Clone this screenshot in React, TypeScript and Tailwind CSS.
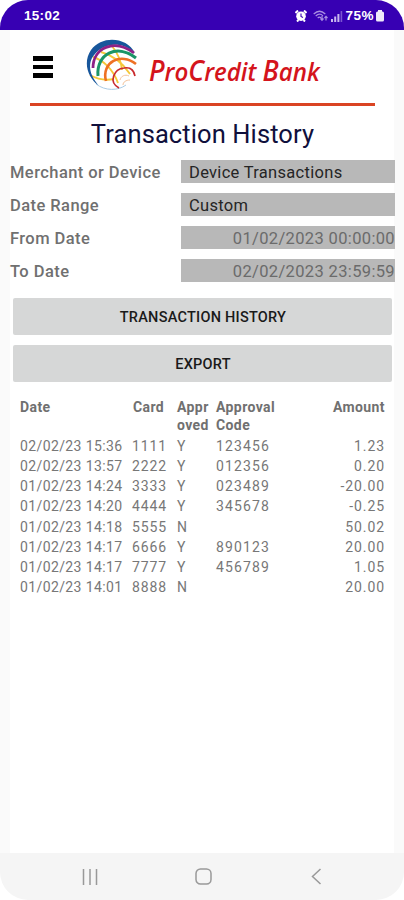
const transactions = [
  { date: '02/02/23 15:36', card: '1111', approved: 'Y', code: '123456', amount: '1.23' },
  { date: '02/02/23 13:57', card: '2222', approved: 'Y', code: '012356', amount: '0.20' },
  { date: '01/02/23 14:24', card: '3333', approved: 'Y', code: '023489', amount: '-20.00' },
  { date: '01/02/23 14:20', card: '4444', approved: 'Y', code: '345678', amount: '-0.25' },
  { date: '01/02/23 14:18', card: '5555', approved: 'N', code: '', amount: '50.02' },
  { date: '01/02/23 14:17', card: '6666', approved: 'Y', code: '890123', amount: '20.00' },
  { date: '01/02/23 14:17', card: '7777', approved: 'Y', code: '456789', amount: '1.05' },
  { date: '01/02/23 14:01', card: '8888', approved: 'N', code: '', amount: '20.00' },
];

const GRID = 'grid grid-cols-[112px_45px_39px_98px_1fr] pl-5 pr-[19px]';

function StatusBar() {
  return (
    <div className="flex h-[30px] shrink-0 items-center rounded-t-[28px] bg-[#3700b3] pl-[24px] pr-[20px] pt-[2px] text-white">
      <span className="font-['Liberation_Sans',sans-serif] text-[13.5px] font-bold tracking-[0.3px]">15:02</span>
      <svg className="ml-auto" width="12" height="12" viewBox="0 0 12 12" aria-hidden>
        <path d="M.5 3 3 .5M11.5 3 9 .5M2 11.5l1.5-1.5M10 11.5 8.5 10" stroke="#fff" strokeWidth="2" />
        <circle cx="6" cy="6.2" r="4.8" fill="#fff" />
        <path d="M6 3.5v3l2 1" fill="none" stroke="#3700b3" strokeWidth="1.1" />
      </svg>
      <svg className="ml-[6px]" width="15" height="12" viewBox="0 0 15 12" fill="none" stroke="#a98de2" aria-hidden>
        <path d="M.7 4Q6.5-1.5 12.3 4M2.7 6Q6.5 2.3 10 5.8M4.7 8Q6.5 6.2 8 8" strokeWidth="1.2" />
        <path d="M9 6v4M7.5 8.5 9 10.3l1.5-1.8M13 10.5v-4M11.5 8 13 6.3 14.5 8" strokeWidth="1.2" />
      </svg>
      <svg className="ml-[3px]" width="12" height="12" viewBox="0 0 12 12" fill="#c9b8ee" aria-hidden>
        <path d="M0 9h2v3H0zM3.2 6.5h2V12h-2zM6.4 4h2v8h-2z" />
        <path d="M9.6 1h1.6v11H9.6z" fill="#7b55d0" />
      </svg>
      <span className="ml-[2px] font-['Liberation_Sans',sans-serif] text-[13.5px] font-bold tracking-[0.5px]">75%</span>
      <svg className="ml-[2px]" width="8" height="12" viewBox="0 0 8 12" fill="#efeafa" aria-hidden>
        <rect x="2" width="4" height="3" />
        <rect y="1.5" width="8" height="10" rx="1.5" />
      </svg>
    </div>
  );
}

function Globe() {
  return (
    <svg width="54" height="54" viewBox="0 0 54 54" fill="none" aria-hidden>
      <g stroke="#f5c83a" strokeWidth="1.9">
        <path d="M27 8c4 5 9 13 10 24" />
        <path d="M16 14c11 3 21 10 29 22" />
        <path d="M8 19c10 3 20 12 25 26" />
        <path d="M5 37c7 4 15 6 24 4" />
      </g>
      <path d="M50 15C42-1 17-3 6 12-2 24 2 39 14 48 5 38 3 28 7 20 15 6 35 1 50 15Z" fill="#17569b" />
      <path d="M11 46c9 7 22 7 30 1" stroke="#a9cbe5" strokeWidth="1" />
      <path d="M8 30C8 10 29 0 49 15" stroke="#8e2186" strokeWidth="2.8" />
      <path d="M13 38C11 16 32 5 51 20" stroke="#1b9567" strokeWidth="3" />
      <path d="M21 43C16 24 36 14 51 26" stroke="#ee7124" strokeWidth="2.6" />
      <path d="M34 50C23 44 29 31 39 30c6-1 10 2 11 8" stroke="#c92a2d" strokeWidth="1.6" />
      <path d="M35 42c1-4 5-6 9-4M38 47c0-3 3-5 7-5" stroke="#f3c29a" strokeWidth="1" />
    </svg>
  );
}

function Header() {
  return (
    <header className="h-[76px] px-[20px]">
      <div className="flex h-[73px] items-start">
        <div className="ml-[3px] mt-[26px] flex w-5 flex-col gap-[4px]">
          <span className="h-[4.5px] bg-black" />
          <span className="h-[4.5px] bg-black" />
          <span className="h-[4.5px] bg-black" />
        </div>
        <div className="ml-[32px] mt-[8px]">
          <Globe />
        </div>
        <span className="ml-[10px] mt-[20px] origin-left scale-x-[0.945] whitespace-nowrap font-['Open_Sans',sans-serif] text-[25.5px] font-semibold italic leading-10 text-[#d4141c]">
          <span className="text-[28px]">P</span>ro<span className="text-[28px]">C</span>redit{' '}
          <span className="text-[28px]">B</span>ank
        </span>
      </div>
      <div className="h-[3px] w-[345px] bg-[#da4423]" />
    </header>
  );
}

type FieldProps = {
  label: string;
  value: string;
  isDate?: boolean;
};

function Field({ label, value, isDate }: FieldProps) {
  return (
    <div className="flex h-[23px] items-center">
      <span className="w-[171px] shrink-0 pt-[3px] text-[16.5px] font-medium tracking-[0.43px] text-[#707070]">
        {label}
      </span>
      <span
        className={
          isDate
            ? 'h-[23px] w-[214px] shrink-0 bg-[#b8b8b8] text-right text-[16.5px] leading-[26px] tracking-[0.35px] text-[#6b6b6b]'
            : 'h-[23px] w-[214px] shrink-0 bg-[#b8b8b8] pl-2 text-[16.5px] leading-[26px] tracking-[0.3px] text-[#252525]'
        }
      >
        {value}
      </span>
    </div>
  );
}

function ActionButton({ label }: { label: string }) {
  return (
    <button
      type="button"
      className="h-[37px] w-full rounded-[2px] bg-[#d6d7d7] pl-px pt-[3px] text-[14.5px] font-medium tracking-[0.25px] text-[#1a1a1a]"
    >
      {label}
    </button>
  );
}

function TransactionTable() {
  return (
    <div className="-mx-[10px] mt-[16px] text-[#777]">
      <div className={`${GRID} mb-[1.5px] h-[36px] text-[14px] font-bold leading-[18px] tracking-[0.4px] text-[#707070]`}>
        <span>Date</span>
        <span className="pl-px">Card</span>
        <span>
          Appr
          <br />
          oved
        </span>
        <span>
          Approval
          <br />
          Code
        </span>
        <span className="text-right">Amount</span>
      </div>
      {transactions.map((row) => (
        <div key={row.card} className={`${GRID} h-[20.25px] text-[14px] leading-[20.25px]`}>
          <span className="whitespace-nowrap tracking-[0.38px]">{row.date}</span>
          <span className="tracking-[0.9px]">{row.card}</span>
          <span>{row.approved}</span>
          <span className="tracking-[1.15px]">{row.code}</span>
          <span className="text-right tracking-[0.9px]">{row.amount}</span>
        </div>
      ))}
    </div>
  );
}

function NavBar() {
  return (
    <nav className="flex h-[47px] shrink-0 items-center rounded-b-[28px] bg-[#f5f5f5] text-[#999]">
      <svg className="ml-[82px]" width="16" height="16" viewBox="0 0 16 16" stroke="currentColor" strokeWidth="1.5" aria-hidden>
        <path d="M1.5 0v16M8 0v16M14.5 0v16" />
      </svg>
      <svg className="ml-[97px]" width="17" height="17" viewBox="0 0 17 17" fill="none" stroke="currentColor" strokeWidth="1.5" aria-hidden>
        <rect x="1" y="1" width="15" height="15" rx="4.5" />
      </svg>
      <svg className="ml-[99px]" width="11" height="17" viewBox="0 0 11 17" fill="none" stroke="currentColor" strokeWidth="1.5" aria-hidden>
        <path d="M9.5 1 1.5 8.5l8 7.5" />
      </svg>
    </nav>
  );
}

export default function App() {
  return (
    <div className="flex h-[900px] w-[404px] flex-col overflow-hidden bg-white font-[Roboto,sans-serif]">
      <StatusBar />
      <main className="flex-1 border-x-[10px] border-[#fafafa] bg-white">
        <Header />
        <h1 className="mt-[8px] pl-px text-center text-[25.5px] leading-[40px] tracking-[0.1px] text-[#10103c]">
          Transaction History
        </h1>
        <div className="mt-[6px] flex flex-col gap-[10px]">
          <Field label="Merchant or Device" value="Device Transactions" />
          <Field label="Date Range" value="Custom" />
          <Field label="From Date" value="01/02/2023 00:00:00" isDate />
          <Field label="To Date" value="02/02/2023 23:59:59" isDate />
        </div>
        <div className="mt-[16px] flex flex-col gap-[10px] pl-[3px] pr-[2px]">
          <ActionButton label="TRANSACTION HISTORY" />
          <ActionButton label="EXPORT" />
        </div>
        <TransactionTable />
      </main>
      <NavBar />
    </div>
  );
}
